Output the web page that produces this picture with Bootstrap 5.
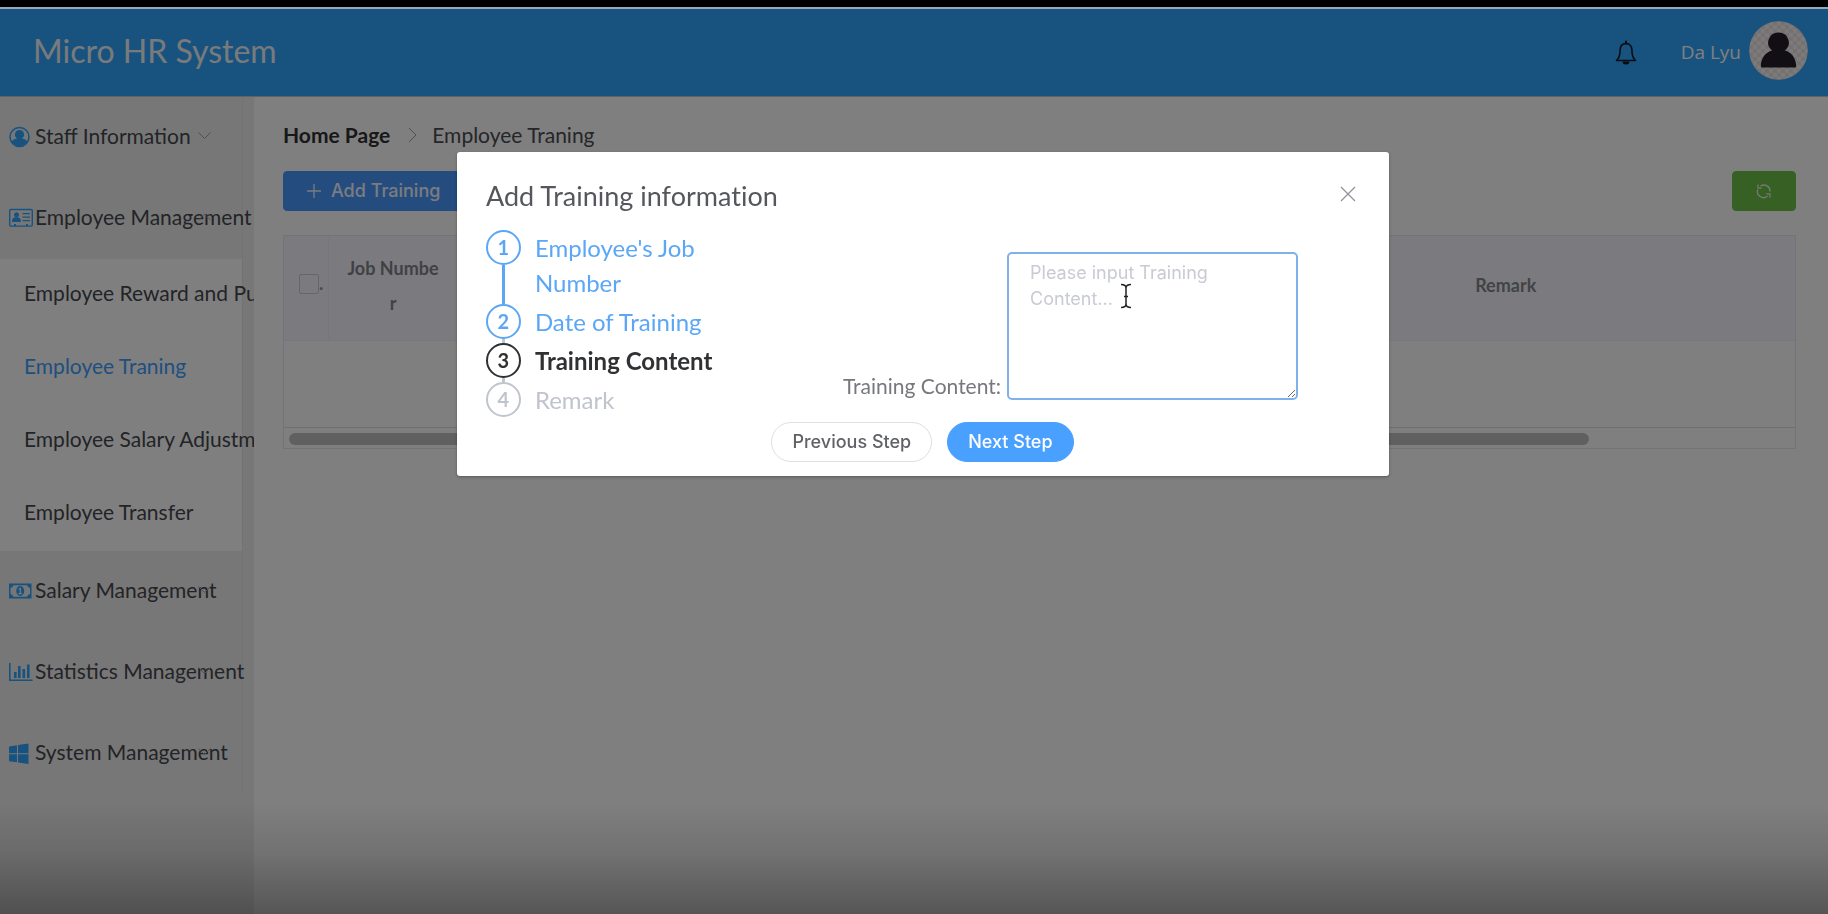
<!DOCTYPE html>
<html lang="en">
<head>
<meta charset="utf-8">
<meta name="viewport" content="width=device-width, initial-scale=1">
<title>Micro HR System</title>
<link href="https://cdn.jsdelivr.net/npm/bootstrap@5.3.0/dist/css/bootstrap.min.css" rel="stylesheet">
<style>
  :root { --hr-blue: #30a4ff; --hr-primary: #409eff; --hr-line: #ebeef5; }
  body { font-family: Lato, "Liberation Sans", sans-serif; font-size: 21px; font-variant-ligatures: none; color: #4a4c52; background: #fff; }
  .top-strip { height: 9px; background: #000; border-bottom: 2px solid #98a8b8; z-index: 1060; }
  .app-header { height: 88px; background: var(--hr-blue); color: #fff; padding: 0 20px 0 33px; border-bottom: 1px solid #c0c4cc; }
  .app-name { font-size: 32px; line-height: 40px; font-weight: 400; color: #f0f4f8; padding-bottom: 3px; }
  .user-name { font-family: "Open Sans", sans-serif; font-size: 19px; color: #fff; }
  .bell-btn { margin-right: 43px; color: #101820; }
  .side { width: 254px; flex: none; background: #efefef; overflow: hidden; }
  .side-inner { border-right: 1px solid #e6e6e6; width: 243px; }
  .side-link { height: 81px; padding: 0 0 3px 9px; width: 100%; color: #46484e; font-size: 21px; white-space: nowrap; text-align: left; }
  .side-ico { width: 24px; height: 24px; flex: none; margin-right: 2px; fill: var(--hr-blue); }
  .side-link .chev { position: absolute; left: 197px; top: 34px; }
  .sub-menu { background: #fff; }
  .sub-menu a { height: 73px; padding: 0 0 5px 24px; color: #46484e; white-space: nowrap; text-decoration: none; }
  .sub-menu a.on { color: var(--hr-primary); }
  .chev { fill: none; stroke: #a0a3a9; stroke-width: 1; }
  .crumbs .chev { margin: 0 14px 0 18px; }
  .main-area { padding: 18px 32px 20px 29px; min-width: 0; }
  .crumbs { line-height: 40px; }
  .crumbs strong { font-weight: 700; color: #303133; }
  .add-btn, .refresh-btn, .step-btn { font-family: Inter, sans-serif; font-weight: 500; font-size: 18px; line-height: 24px; padding: 7px 21px; border-radius: 4px; }
  .add-btn { background: #4a98ff; border-color: #4a98ff; color: #f4f8ff; }
  .refresh-btn { background: #6fc148; border-color: #6fc148; width: 64px; padding: 7px 0; }
  .grid-box { border: 1px solid #e6e8f2; margin-top: 24px; }
  .grid-box table { table-layout: fixed; margin: 0; }
  .grid-box th { background: #f6f7fe; height: 104px; font-size: 18px; line-height: 35px; font-weight: 700; color: #909399; text-align: center; vertical-align: middle; padding: 0 17px 4px; border: 1px solid #eceef8; border-width: 0 1px 1px 0; word-break: break-all; box-shadow: none; }
  .grid-box th:last-child { border-right: 0; }
  .grid-box td { height: 87px; border-bottom: 1px solid #dfdfdf; box-shadow: none; padding: 0; }
  .grid-box th.col-tick { width: 44px; padding: 0 0 8px 7px; }
  .grid-box th.col-job { width: 130px; color: #808388; }
  .grid-box th.col-gap { width: 758px; }
  .grid-box th.col-remark { color: #85878c; }
  .grid-box .form-check-input { width: 20px; height: 20px; border-color: #c9cdd8; background-color: transparent; border-radius: 2px; margin: 0; }
  .bar-track { padding: 5px; height: 20px; }
  .bar-thumb { height: 12px; width: 86.6%; border-radius: 6px; background: #c1c1c1; }
  .bottom-shade { height: 110px; background: linear-gradient(rgba(0,0,0,0), rgba(0,0,0,.1) 45%, rgba(0,0,0,.32)); z-index: 1052; pointer-events: none; }
  .train-modal { padding: 152px 0 0 18px; pointer-events: none; }
  .train-modal .modal-dialog { margin: 0 auto; max-width: none; width: 51.5%; }
  .train-modal .modal-content { border: 0; border-radius: 3px; padding: 23px 30px 14px 29px; box-shadow: 0 1px 3px rgba(0,0,0,.3); }
  .train-modal .modal-title { font-size: 27px; line-height: 42px; font-weight: 400; color: #55575c; }
  .close-btn { color: #909399; padding: 3px; margin-top: -4px; line-height: 0; }
  .step-list { width: 232px; flex: none; display: grid; gap: 4px; margin: 13px 0 0; font-size: 24px; line-height: 35px; }
  .step-list li { position: relative; display: flex; gap: 14px; color: #c0c4cc; }
  .step-list .num { width: 35px; height: 35px; flex: none; border: 2px solid currentColor; border-radius: 50%; background: #fff; font-size: 20px; line-height: 30px; font-weight: 700; text-align: center; z-index: 1; }
  .step-list li:not(:last-child)::before { content: ""; position: absolute; left: 16px; top: 35px; bottom: -4px; width: 3px; background: #c0c4cc; }
  .step-list li.done { color: #5ca7f5; }
  .step-list li.long::before { background: #5ca7f5 !important; }
  .step-list li.now { color: #303133; font-weight: 700; }
  .content-box { font-family: Inter, sans-serif; font-size: 18px; line-height: 26px; width: 291px; height: 148px; padding: 6px 21px; border: 2px solid #7fb2ec; border-radius: 5px; resize: both; }
  .content-box::placeholder { color: #c9cbd3; opacity: 1; }
  .content-field { margin: 35px 61px 0 0; gap: 6px; }
  .content-field label { font-size: 21px; line-height: 28px; color: #76787c; }
  .step-btn { border-radius: 20px; padding: 7px 20px; }
  .step-btn.prev { border: 1px solid #dcdfe6; color: #606266; }
  .step-btn.next { background: #4aa0ff; border-color: #4aa0ff; color: #fff; }
  .step-actions { gap: 15px; margin-top: 5px; }
  .ibeam { position: absolute; left: 113px; top: 31px; pointer-events: none; }
</style>
<script src="https://cdn.jsdelivr.net/npm/bootstrap@5.3.0/dist/js/bootstrap.bundle.min.js"></script>
</head>
<body>
<div class="d-flex flex-column min-vh-100">
  <div class="top-strip position-relative"></div>
  <header class="app-header d-flex align-items-center">
    <h1 class="app-name m-0 me-auto">Micro HR System</h1>
    <button class="bell-btn btn border-0 p-0" type="button" aria-label="Notifications">
      <svg width="24" height="26" viewBox="0 0 24 26" fill="none" stroke="currentColor" stroke-width="1.600" stroke-linejoin="round"><path d="M12 3.500c-4.200 0-6 3.200-6 7.500 0 5-1 7.300-3.500 9.500h19c-2.500-2.200-3.500-4.500-3.500-9.500 0-4.300-1.800-7.500-6-7.500z"/><path d="M12 1.500v2" stroke-linecap="round" stroke-width="2"/><path d="M8.500 21.500h7a3.500 3 0 0 1-7 0z" fill="currentColor" stroke="none"/></svg>
    </button>
    <a href="#" class="d-flex align-items-center text-decoration-none user-name gap-2">Da Lyu
      <svg class="mb-1" width="59" height="59" viewBox="0 0 59 59" aria-hidden="true">
        <defs><pattern id="checks" width="8" height="8" patternUnits="userSpaceOnUse"><path fill="#fdf4f2" d="M0 0h8v8H0z"/><path fill="#e6e2e2" d="M0 0h4v4H0zM4 4h4v4H4z"/></pattern></defs>
        <circle cx="29.500" cy="29.500" r="29.300" fill="url(#checks)"/>
        <path fill="#221c28" d="M29.500 11.500a10 10 0 0 1 6.300 18c6.500 1.500 11.200 7.500 11.400 15.500a1.500 1.500 0 0 1-1.500 1.500H13.300a1.500 1.500 0 0 1-1.500-1.500c.2-8 4.900-14 11.400-15.500a10 10 0 0 1 6.300-18z"/>
      </svg>
    </a>
  </header>
  <div class="d-flex flex-grow-1">
    <nav class="side">
      <div class="side-inner">
      <button type="button" class="side-link btn border-0 rounded-0 position-relative d-flex align-items-center">
        <svg class="side-ico" viewBox="0 0 24 24"><circle cx="10.500" cy="13" r="9.500" fill="none" stroke="#30a4ff" stroke-width="1.500"/><path d="M10.500 6a4.600 4.600 0 0 1 2.600 8.400c3 .3 4.600 1.600 5.300 3.400a9.300 9.300 0 0 1-15.800 0c.7-1.800 2.300-3.100 5.300-3.400A4.600 4.600 0 0 1 10.500 6z"/></svg>Staff Information
        <svg class="chev" width="15" height="10" viewBox="0 0 15 10"><path d="M1.500 1.500l6 6 6-6"/></svg>
      </button>
      <button type="button" class="side-link btn border-0 rounded-0 position-relative d-flex align-items-center">
        <svg class="side-ico" viewBox="0 0 24 24"><path d="M2 4.500h20a1.300 1.300 0 0 1 1.300 1.300v14a1.300 1.300 0 0 1-1.300 1.300H2A1.300 1.300 0 0 1 .7 19.800v-14A1.300 1.300 0 0 1 2 4.500z" fill="none" stroke="#30a4ff" stroke-width="1.400"/><circle cx="7.500" cy="9.800" r="2.500"/><path d="M3 17c0-3.500 1.500-4.700 4.500-4.700S12 13.500 12 17zM13.500 8H21v1.300h-7.500zM13.500 11.500H21v1.300h-7.500zM13.500 15H21v1.300h-7.500zM5 19h2v2H5zM17 19h2v2h-2z"/></svg>Employee Management
        <svg class="chev" width="15" height="10" viewBox="0 0 15 10"><path d="M1.500 8l6-6 6 6"/></svg>
      </button>
      <div class="sub-menu">
        <a href="#" class="d-flex align-items-center">Employee Reward and Pu</a>
        <a href="#" class="d-flex align-items-center on">Employee Traning</a>
        <a href="#" class="d-flex align-items-center">Employee Salary Adjustm</a>
        <a href="#" class="d-flex align-items-center">Employee Transfer</a>
      </div>
      <button type="button" class="side-link btn border-0 rounded-0 position-relative d-flex align-items-center">
        <svg class="side-ico" viewBox="0 0 24 24"><path fill-rule="evenodd" d="M0 5.500h22.500v15H0zM4.500 7.200A4 4 0 0 1 1.500 10v6a4 4 0 0 1 3 2.800H18a4 4 0 0 1 3-2.800v-6a4 4 0 0 1-3-2.800zM11.200 8a4 5 0 1 1 0 10 4 5 0 0 1 0-10zm.8 1.800h-1L9.500 11v1l1.200-.5V15H9.500v1.200H13V15h-1z"/></svg>Salary Management
        <svg class="chev" width="15" height="10" viewBox="0 0 15 10"><path d="M1.500 1.500l6 6 6-6"/></svg>
      </button>
      <button type="button" class="side-link btn border-0 rounded-0 position-relative d-flex align-items-center">
        <svg class="side-ico" viewBox="0 0 24 24"><path d="M0 4h1.600v16.400h22V22H0zM5 13h2.600v6H5zM9 7h2.600v12H9zM13.500 10h2.600v9h-2.600zM18 5.500h2.600V19H18z"/></svg>Statistics Management
        <svg class="chev" width="15" height="10" viewBox="0 0 15 10"><path d="M1.500 1.500l6 6 6-6"/></svg>
      </button>
      <button type="button" class="side-link btn border-0 rounded-0 position-relative d-flex align-items-center">
        <svg class="side-ico" viewBox="0 0 24 24"><path d="M0 6.500l8-1.200v8H0zM9 5.100L19.500 3.500v9.800H9zM0 14.300h8v8l-8-1.100zM9 14.300h10.500V24L9 22.400z"/></svg>System Management
        <svg class="chev" width="15" height="10" viewBox="0 0 15 10"><path d="M1.500 1.500l6 6 6-6"/></svg>
      </button>
      </div>
    </nav>
    <main class="main-area flex-grow-1">
      <nav aria-label="breadcrumb" class="crumbs d-flex align-items-center">
        <strong>Home Page</strong>
        <svg class="chev" width="10" height="18" viewBox="0 0 10 18"><path d="M1 2l7 7-7 7"/></svg>
        <span>Employee Traning</span>
      </nav>
      <div class="d-flex justify-content-between mt-3">
        <button type="button" class="add-btn btn d-flex align-items-center gap-2"><svg width="18" height="18" viewBox="0 0 18 18" stroke="currentColor" stroke-width="1.300"><path d="M2 9h14M9 2v14"/></svg>Add Training</button>
        <button type="button" class="refresh-btn btn d-flex align-items-center justify-content-center" aria-label="Refresh"><svg width="16" height="16" viewBox="0 0 16 16" fill="none" stroke="#e8f5e0" stroke-width="1.300"><path d="M4.500 3.200A6 6 0 0 1 14 8.500M1.800 6.500A6 6 0 0 0 11.500 13M2 1.500v3.700h3.700M14 14.500v-3.700h-3.700"/></svg></button>
      </div>
      <div class="grid-box">
        <table class="table">
          <thead><tr><th class="col-tick"><span class="d-flex align-items-center"><input class="form-check-input ms-2" type="checkbox" aria-label="Select all">.</span></th><th class="col-job">Job Number</th><th class="col-gap"></th><th class="col-remark">Remark</th></tr></thead>
          <tbody><tr><td colspan="4"></td></tr></tbody>
        </table>
        <div class="bar-track"><div class="bar-thumb"></div></div>
      </div>
    </main>
  </div>
</div>

<div class="modal-backdrop show"></div>
<div class="bottom-shade fixed-bottom"></div>

<div class="modal d-block train-modal" tabindex="-1" role="dialog" aria-labelledby="dlgTitle">
  <div class="modal-dialog">
    <div class="modal-content">
      <div class="d-flex justify-content-between align-items-center">
        <h2 class="modal-title" id="dlgTitle">Add Training information</h2>
        <button type="button" class="close-btn btn border-0" aria-label="Close"><svg width="16" height="16" viewBox="0 0 16 16" stroke="currentColor" stroke-width="1.300"><path d="M1 1l14 14M15 1L1 15"/></svg></button>
      </div>
      <div class="d-flex justify-content-between align-items-start">
        <ol class="step-list list-unstyled">
          <li class="done long"><span class="num">1</span><span>Employee's Job Number</span></li>
          <li class="done"><span class="num">2</span><span>Date of Training</span></li>
          <li class="now"><span class="num">3</span><span class="text-nowrap">Training Content</span></li>
          <li><span class="num">4</span><span>Remark</span></li>
        </ol>
        <div class="content-field d-flex align-items-end">
          <label for="content">Training Content:</label>
          <div class="position-relative d-flex">
            <textarea id="content" class="content-box" placeholder="Please input Training Content..."></textarea>
            <svg class="ibeam" width="12" height="26" viewBox="0 0 12 26" fill="none" stroke="#222" stroke-width="1.500"><path d="M1 1.500c3 0 5 .8 5 3.500v16c0 2.700-2 3.500-5 3.500M11 1.500c-3 0-5 .8-5 3.500M6 21c0 2.700 2 3.500 5 3.500M4 13.500h4"/></svg>
          </div>
        </div>
      </div>
      <div class="step-actions d-flex justify-content-center">
        <button type="button" class="step-btn prev btn">Previous Step</button>
        <button type="button" class="step-btn next btn">Next Step</button>
      </div>
    </div>
  </div>
</div>
</body>
</html>
